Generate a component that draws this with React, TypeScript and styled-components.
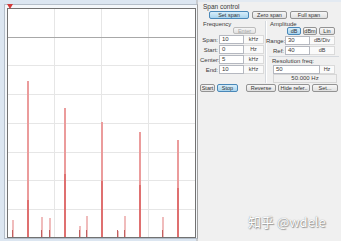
import React from "react";
import styled, { createGlobalStyle } from "styled-components";

const GlobalStyle = createGlobalStyle`
  html, body {
    margin: 0;
    padding: 0;
  }
  body {
    font-family: "Liberation Sans", "DejaVu Sans", sans-serif;
    background: #dce6f1;
  }
`;

const Window = styled.div`
  position: relative;
  width: 341px;
  height: 241px;
  display: flex;
  overflow: hidden;
  background: #dce6f1;
`;

const PlotPane = styled.div`
  width: 198px;
  box-sizing: border-box;
  padding: 4px 0 2px 4px;
  display: flex;
  border-right: 2px solid #c9ccd0;
`;

const PlotFrame = styled.div`
  position: relative;
  flex: 1;
  display: flex;
  padding: 3px 1px 1px 2px;
  border: 1px solid #b4bec9;
  border-right-color: #a0a0a0;
  background: #f4f7fa;
`;

const Plot = styled.div`
  width: 187px;
  height: 228px;
  border: 1px solid #727272;
  background: #ffffff;
`;

const Marker = styled.div`
  position: absolute;
  left: 2px;
  top: -1px;
  width: 0;
  height: 0;
  border-left: 3px solid transparent;
  border-right: 3px solid transparent;
  border-top: 5px solid #d23a3a;
`;

const Panel = styled.div`
  flex: 1;
  display: flex;
  flex-direction: column;
  background: #f0f0f0;
  border-top: 2px solid #e3eaf2;
  padding: 1px 2px 0 2px;
  font-size: 6px;
  color: #3a3a3a;
`;

const GroupTitle = styled.div`
  height: 8px;
  line-height: 8px;
  padding-left: 3px;
  font-size: 6.5px;
`;

const ButtonRow = styled.div<{ $indent?: number; $gap?: number }>`
  display: flex;
  gap: ${(p) => p.$gap ?? 3}px;
  padding-left: ${(p) => p.$indent ?? 0}px;
`;

const Btn = styled.div<{ $w: number; $on?: boolean; $off?: boolean }>`
  width: ${(p) => p.$w}px;
  height: 8px;
  box-sizing: border-box;
  border: 1px solid ${(p) => (p.$on ? "#4a88b8" : p.$off ? "#bcbcbc" : "#939393")};
  border-radius: 2px;
  background: ${(p) =>
    p.$on
      ? "linear-gradient(#d8eefa, #a9d4ee)"
      : "linear-gradient(#f7f7f7, #e0e0e0)"};
  color: ${(p) => (p.$off ? "#a8a8a8" : "#333")};
  font-size: 5.5px;
  line-height: 6px;
  text-align: center;
  white-space: nowrap;
  overflow: hidden;
`;

const Columns = styled.div`
  display: grid;
  grid-template-columns: 65px 1px 1fr;
  margin-top: 2px;
  height: 60px;
`;

const Separator = styled.div`
  background: #d5d9de;
  box-shadow: 1px 0 0 #fff;
`;

const Column = styled.div`
  display: flex;
  flex-direction: column;
`;

const ColTitle = styled.div<{ $indent: number }>`
  height: 6px;
  line-height: 6px;
  padding-left: ${(p) => p.$indent}px;
  font-size: 6px;
`;

const FieldRow = styled.div<{ $cols: string }>`
  display: grid;
  grid-template-columns: ${(p) => p.$cols};
  height: 9px;
  margin-top: 1px;
  align-items: center;
`;

const Label = styled.div`
  text-align: right;
  padding-right: 1px;
  font-size: 6px;
  white-space: nowrap;
`;

const Input = styled.div`
  height: 9px;
  box-sizing: border-box;
  border: 1px solid #b5b8c0;
  background: #fff;
  padding-left: 2px;
  font-size: 6px;
  line-height: 7px;
`;

const Unit = styled.div`
  height: 9px;
  box-sizing: border-box;
  border: 1px solid #dadada;
  border-left: none;
  background: #fafafa;
  font-size: 5.5px;
  line-height: 7px;
  text-align: center;
  white-space: nowrap;
`;

const HLine = styled.div`
  height: 1px;
  margin: 1px 0 1px 3px;
  background: #d5d9de;
`;

const Readout = styled.div`
  height: 9px;
  margin: 0 2px 0 7px;
  box-sizing: border-box;
  border: 1px solid #d6d6d6;
  font-size: 6px;
  line-height: 7px;
  text-align: center;
`;

const Watermark = styled.div`
  position: absolute;
  left: 248px;
  top: 212px;
  font-family: "Noto Sans CJK SC", "DejaVu Sans", sans-serif;
  font-size: 13px;
  color: #ffffff;
  text-shadow: 0 0 1px #7a7a7a, 1px 1px 1px #9a9a9a;
  white-space: nowrap;
`;

const peaks = [
  { x: 19, top: 72, thick: 191 },
  { x: 56, top: 99, thick: 165 },
  { x: 93, top: 113, thick: 172 },
  { x: 131, top: 123, thick: 176 },
  { x: 169, top: 131, thick: 179 },
];

const small = [
  { x: 4, top: 211 },
  { x: 33, top: 208 },
  { x: 41, top: 209 },
  { x: 71, top: 217 },
  { x: 78, top: 207 },
  { x: 109, top: 222 },
  { x: 116, top: 207 },
  { x: 154, top: 208 },
];

const Spectrum = () => {
  const w = 187;
  const h = 228;
  const vx = [46, 93, 140];
  const hy = [56, 85, 114, 143, 171, 200];
  return (
    <svg width={w} height={h} style={{ display: "block" }} shapeRendering="crispEdges">
      {vx.map((x) => (
        <rect key={x} x={x} y={0} width={1} height={h} fill="#e6e6e6" />
      ))}
      {hy.map((y) => (
        <rect key={y} x={0} y={y} width={w} height={1} fill="#e6e6e6" />
      ))}
      <rect x={0} y={28} width={w} height={1} fill="#a8a8a8" />
      {small.map((p) => (
        <g key={p.x}>
          <rect x={p.x} y={p.top} width={2} height={h - p.top} fill="#f0bcbc" />
          <rect x={p.x} y={h - 7} width={1} height={7} fill="#c06060" />
        </g>
      ))}
      {peaks.map((p) => (
        <g key={p.x}>
          <rect x={p.x} y={p.top} width={2} height={h - p.top} fill="#eb9c9c" />
          <rect x={p.x} y={p.thick} width={2} height={h - p.thick} fill="#df7070" />
        </g>
      ))}
    </svg>
  );
};

export default function App() {
  return (
    <>
      <GlobalStyle />
      <Window>
        <PlotPane>
          <PlotFrame>
            <Marker />
            <Plot>
              <Spectrum />
            </Plot>
          </PlotFrame>
        </PlotPane>
        <Panel>
          <GroupTitle>Span control</GroupTitle>
          <ButtonRow $indent={9} $gap={3}>
            <Btn $w={40} $on>Set span</Btn>
            <Btn $w={35}>Zero span</Btn>
            <Btn $w={38}>Full span</Btn>
          </ButtonRow>
          <Columns>
            <Column>
              <ColTitle $indent={3}>Frequency</ColTitle>
              <ButtonRow $indent={33}>
                <Btn $w={23} $off style={{ height: 7 }}>Enter</Btn>
              </ButtonRow>
              <FieldRow $cols="19px 25px 20px">
                <Label>Span:</Label>
                <Input>10</Input>
                <Unit>kHz</Unit>
              </FieldRow>
              <FieldRow $cols="19px 25px 20px">
                <Label>Start:</Label>
                <Input>0</Input>
                <Unit>Hz</Unit>
              </FieldRow>
              <FieldRow $cols="19px 25px 20px">
                <Label>Center:</Label>
                <Input>5</Input>
                <Unit>kHz</Unit>
              </FieldRow>
              <FieldRow $cols="19px 25px 20px">
                <Label>End:</Label>
                <Input>10</Input>
                <Unit>kHz</Unit>
              </FieldRow>
            </Column>
            <Separator />
            <Column>
              <ColTitle $indent={4}>Amplitude</ColTitle>
              <ButtonRow $indent={21} $gap={2}>
                <Btn $w={14} $on>dB</Btn>
                <Btn $w={14}>dBm</Btn>
                <Btn $w={16}>Lin</Btn>
              </ButtonRow>
              <FieldRow $cols="19px 25px 25px">
                <Label>Range:</Label>
                <Input>30</Input>
                <Unit>dB/Div</Unit>
              </FieldRow>
              <FieldRow $cols="19px 25px 25px">
                <Label>Ref:</Label>
                <Input>40</Input>
                <Unit>dB</Unit>
              </FieldRow>
              <HLine />
              <ColTitle $indent={6}>Resolution freq:</ColTitle>
              <FieldRow $cols="7px 47px 15px">
                <span />
                <Input>50</Input>
                <Unit>Hz</Unit>
              </FieldRow>
              <Readout>50.000 Hz</Readout>
            </Column>
          </Columns>
          <ButtonRow $gap={2} style={{ marginTop: 3 }}>
            <Btn $w={15}>Start</Btn>
            <Btn $w={21} $on>Stop</Btn>
            <Btn $w={30} style={{ marginLeft: 6 }}>Reverse</Btn>
            <Btn $w={32}>Hide refer..</Btn>
            <Btn $w={26}>Set...</Btn>
          </ButtonRow>
        </Panel>
        <Watermark>知乎 @wdele</Watermark>
      </Window>
    </>
  );
}
